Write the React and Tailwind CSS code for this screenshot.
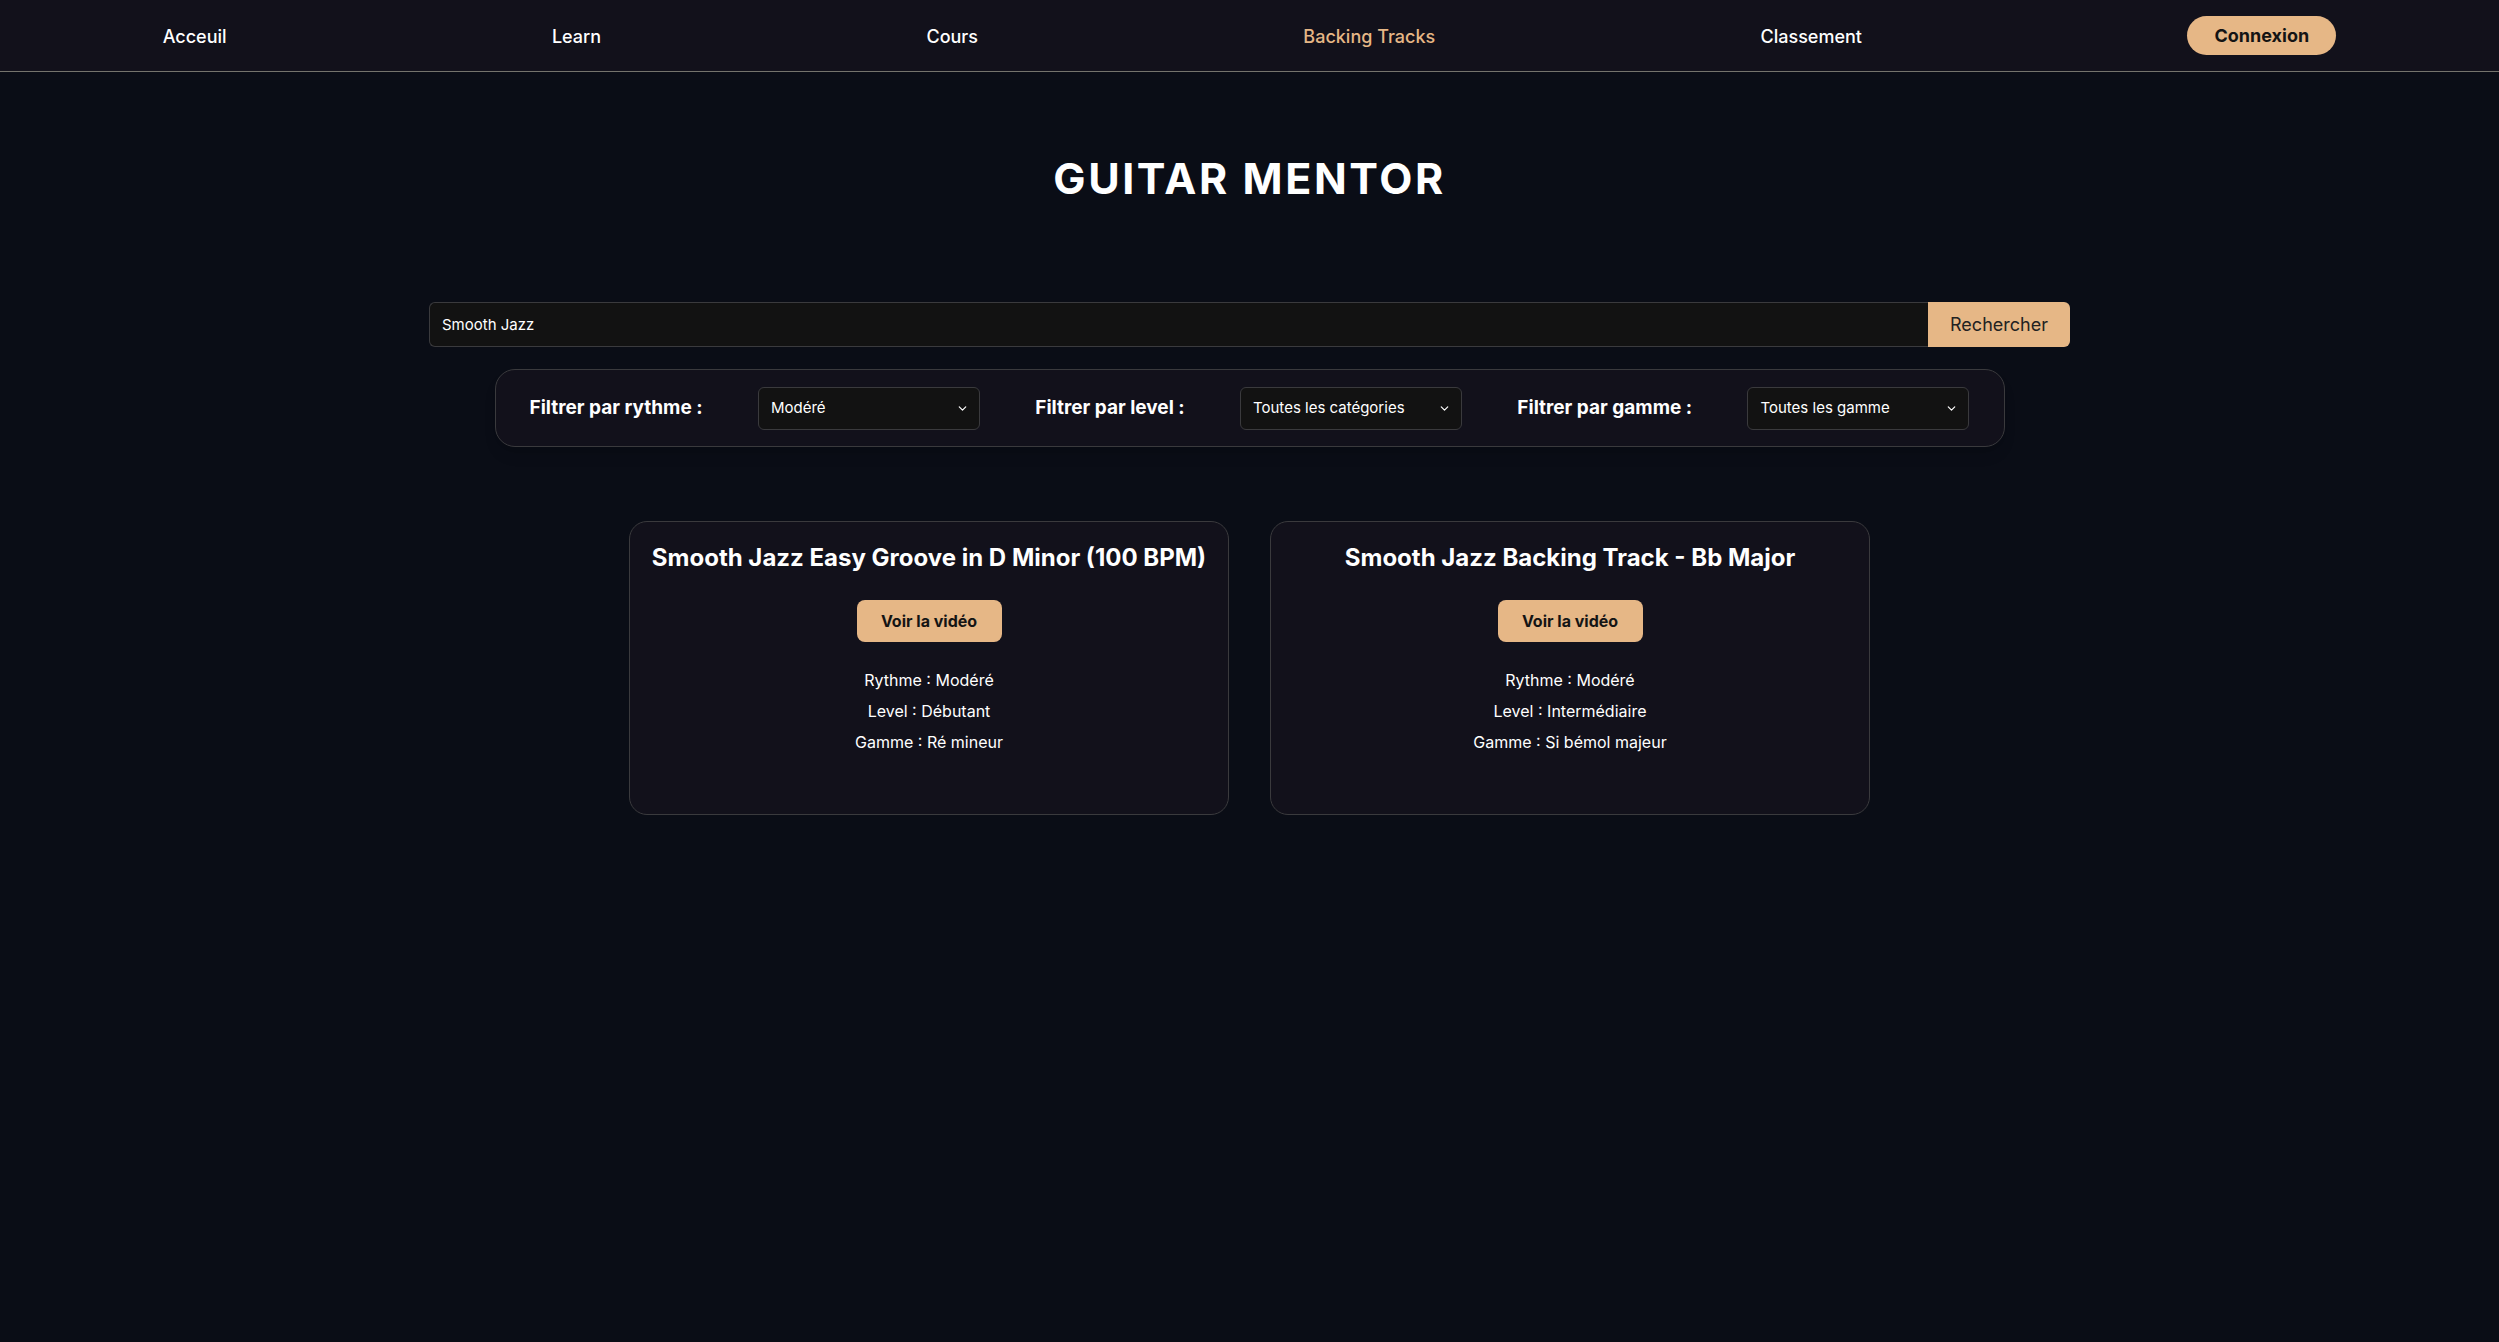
import { ChevronDown } from 'lucide-react'

const links = ['Acceuil', 'Learn', 'Cours', 'Backing Tracks', 'Classement']

const tracks = [
  {
    title: 'Smooth Jazz Easy Groove in D Minor (100 BPM)',
    rythme: 'Modéré',
    level: 'Débutant',
    gamme: 'Ré mineur',
  },
  {
    title: 'Smooth Jazz Backing Track - Bb Major',
    rythme: 'Modéré',
    level: 'Intermédiaire',
    gamme: 'Si bémol majeur',
  },
]

function FakeSelect({ value }) {
  return (
    <div className="flex h-[43px] w-[222px] items-center justify-between rounded-[6px] border border-[#3a3a3d] bg-[#121212] pl-[12px] pr-[10px] text-[15px] text-white">
      <span>{value}</span>
      <ChevronDown size={13} strokeWidth={2.2} className="text-white" />
    </div>
  )
}

export default function App() {
  return (
    <div className="min-h-screen bg-[#0a0d16] font-['Inter',sans-serif] text-white">
      {/* navbar */}
      <nav className="flex h-[72px] items-center justify-around border-b border-[#74736c] bg-[#12111b]">
        {links.map((l) => (
          <a
            key={l}
            className={`pt-[2px] text-[18px] font-medium ${l === 'Backing Tracks' ? 'text-[#e6b786]' : 'text-white'}`}
          >
            {l}
          </a>
        ))}
        <button className="h-[39px] w-[149px] rounded-full bg-[#e6b786] text-[18px] font-bold text-[#141414]">
          Connexion
        </button>
      </nav>

      <main className="flex flex-col items-center">
        <h1 className="mt-[81px] text-[43px] font-bold leading-[50px] tracking-[0.06em]">GUITAR MENTOR</h1>

        {/* recherche */}
        <div className="mt-[99px] flex h-[45px] w-[1641px]">
          <input
            defaultValue="Smooth Jazz"
            className="h-full flex-1 rounded-l-[6px] border border-r-0 border-[#3a3a3d] bg-[#121212] pl-[12px] text-[15px] text-white outline-none"
          />
          <button className="h-full w-[142px] rounded-r-[6px] bg-[#e6b786] text-[18px] text-[#222]">
            Rechercher
          </button>
        </div>

        {/* filtres */}
        <div className="mt-[22px] flex h-[78px] w-[1510px] items-center justify-between rounded-[20px] border border-[#3a3a3d] bg-[#12111b] px-[34px] shadow-lg">
          <span className="text-[19px] font-bold">Filtrer par rythme :</span>
          <FakeSelect value="Modéré" />
          <span className="text-[19px] font-bold">Filtrer par level :</span>
          <FakeSelect value="Toutes les catégories" />
          <span className="text-[19px] font-bold">Filtrer par gamme :</span>
          <FakeSelect value="Toutes les gamme" />
        </div>

        {/* cartes */}
        <div className="mt-[74px] flex gap-[41px]">
          {tracks.map((t) => (
            <div
              key={t.title}
              className="flex h-[294px] w-[600px] flex-col items-center rounded-[18px] border border-[#3a3a3d] bg-[#12111b] pt-[20px]"
            >
              <h2 className="text-[24px] font-bold leading-[32px]">{t.title}</h2>
              <button className="mt-[26px] h-[42px] w-[145px] rounded-[8px] bg-[#e6b786] text-[16px] font-bold text-[#141414]">
                Voir la vidéo
              </button>
              <div className="mt-[23px] flex flex-col items-center text-[16px] leading-[31px]">
                <p>Rythme : {t.rythme}</p>
                <p>Level : {t.level}</p>
                <p>Gamme : {t.gamme}</p>
              </div>
            </div>
          ))}
        </div>
      </main>
    </div>
  )
}
